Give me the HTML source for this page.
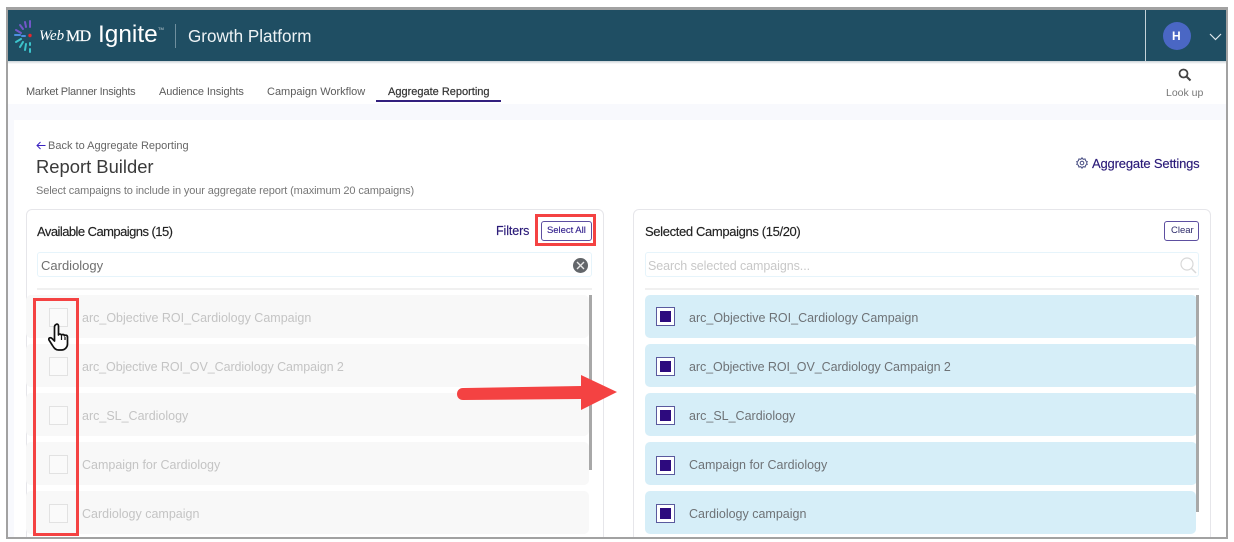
<!DOCTYPE html>
<html><head><meta charset="utf-8">
<style>
html,body{margin:0;padding:0;background:#fff}
#p{position:relative;width:1234px;height:542px;overflow:hidden;background:#fff;font-family:"Liberation Sans",sans-serif;color:#555}
#p div,#p span.t{position:absolute;box-sizing:border-box}
.t{white-space:nowrap;line-height:1}
.row{height:43px;border-radius:5px}
.a{left:26px;width:563px;background:#f8f8f8}
.s{left:645px;width:552px;background:#d6eef8}
.cb{width:19px;height:19px;border:1px solid #e2e2e2;background:#fafafa;left:49px}
.cs{width:19px;height:19px;border:1px solid #5a5a9e;background:#fff;left:656px}
.cs:after{content:"";position:absolute;left:3px;top:3px;width:11px;height:11px;background:#2d0a7e}
.lab{font-size:12.5px;color:#c4c4c4}
.sel{font-size:12.5px;color:#6e7276}
</style></head><body><div id="p">
<div style="left:7px;top:104px;width:1219px;height:434px;background:#f8f9fd"></div>
<div style="left:14px;top:120px;width:1212px;height:418px;background:#fff"></div>
<div style="left:7px;top:10px;width:1219px;height:51px;background:#1f4e63"></div>
<div style="left:7px;top:61px;width:1219px;height:3px;background:linear-gradient(#c9d2d6,#fff)"></div>
<div style="left:1145px;top:10px;width:1px;height:51px;background:#c4d2d8"></div>

<svg style="position:absolute;left:14px;top:19px" width="20" height="34" viewBox="0 0 20 34" fill="none" stroke-linecap="round" stroke-width="2">
<path d="M16 2v6M11 3l1 5M6 6l3 4M2 11l5 3" stroke="#7257c9"/>
<path d="M1 16h5M8 17h3" stroke="#4d8fe0"/>
<path d="M2 23l5-3M6 28l3-5M11 31l1-6M16 33v-3M16 26v-2" stroke="#3cc4cc"/>
<circle cx="16" cy="16.5" r="1.7" fill="#e8262d" stroke="none"/>
</svg>
<span class="t" style="left:39px;top:28px;font:italic 15px 'Liberation Serif',serif;color:#fff;letter-spacing:-.1px">Web</span>
<span class="t" style="left:66px;top:28px;font:16px 'Liberation Serif',serif;color:#fff;letter-spacing:-.6px;-webkit-text-stroke:.2px #fff">MD</span>
<span class="t" style="left:98px;top:23px;font-size:24.4px;color:#fff">Ignite</span>
<span class="t" style="left:158px;top:27px;font-size:4px;color:#cfd8dc">TM</span>
<div style="left:175px;top:24px;width:1px;height:24px;background:#6f8f9e"></div>
<span class="t" style="left:188px;top:28px;font-size:17.1px;color:#eef3f5">Growth Platform</span>
<div style="left:1163px;top:22px;width:28px;height:28px;border-radius:50%;background:#4a67c4"></div>
<span class="t" style="left:1172px;top:30px;font-size:12px;font-weight:bold;color:#fff">H</span>
<svg style="position:absolute;left:1209px;top:33px" width="13" height="8" viewBox="0 0 13 8"><path d="M1 1l5.5 5.500L12 1" fill="none" stroke="#dfe8ec" stroke-width="1.200"/></svg>

<span class="t" style="left:26px;top:87px;font-size:11px;color:#5c5c5c;letter-spacing:-.27px">Market Planner Insights</span>
<span class="t" style="left:159px;top:87px;font-size:11px;color:#5c5c5c;letter-spacing:-.12px">Audience Insights</span>
<span class="t" style="left:267px;top:87px;font-size:11px;color:#5c5c5c">Campaign Workflow</span>
<span class="t" style="left:388px;top:87px;font-size:11px;color:#333;-webkit-text-stroke:.2px #333">Aggregate Reporting</span>
<div style="left:376px;top:100px;width:125px;height:2px;background:#33207e"></div>
<svg style="position:absolute;left:1178px;top:68px" width="14" height="14" viewBox="0 0 14 14"><circle cx="5.5" cy="5.5" r="4" fill="none" stroke="#444" stroke-width="1.800"/><path d="M8.500 8.500l4 4" stroke="#444" stroke-width="2"/></svg>
<span class="t" style="left:1166px;top:88px;font-size:10.5px;color:#777">Look up</span>

<svg style="position:absolute;left:36px;top:141px" width="10" height="9" viewBox="0 0 10 9"><path d="M9.500 4.500H1M4.500 1L1 4.500 4.500 8" fill="none" stroke="#3a22c0" stroke-width="1"/></svg>
<span class="t" style="left:48px;top:141px;font-size:11px;color:#666">Back to Aggregate Reporting</span>
<span class="t" style="left:36px;top:158px;font-size:18.4px;color:#3a3a3a">Report Builder</span>
<span class="t" style="left:36px;top:186px;font-size:11px;color:#777;letter-spacing:-.12px">Select campaigns to include in your aggregate report (maximum 20 campaigns)</span>
<svg style="position:absolute;left:1076px;top:157px" width="12" height="12" viewBox="0 0 12 12" fill="none" stroke="#444a80" stroke-width="1"><circle cx="6" cy="6" r="1.800"/><path d="M6 .8l1.200 1.500 1.900-.3.500 1.800 1.700.9-.8 1.300.8 1.300-1.700.9-.5 1.800-1.900-.3L6 11.200 4.800 9.700l-1.900.3-.5-1.800L.7 7.300 1.500 6 .7 4.700l1.700-.9.5-1.800 1.900.3z"/></svg>
<span class="t" style="left:1092px;top:157px;font-size:13px;color:#2a1a78;letter-spacing:-.17px;-webkit-text-stroke:.15px #2a1a78">Aggregate Settings</span>

<div style="left:26px;top:209px;width:578px;height:340px;border:1px solid #e6e6ea;border-radius:6px;background:#fff"></div>
<div style="left:633px;top:209px;width:578px;height:340px;border:1px solid #e6e6ea;border-radius:6px;background:#fff"></div>

<span class="t" style="left:37px;top:225px;font-size:13px;color:#222;letter-spacing:-.55px;-webkit-text-stroke:.15px #222">Available Campaigns (15)</span>
<span class="t" style="left:496px;top:225px;font-size:12.5px;color:#2a1a78;letter-spacing:-.1px;-webkit-text-stroke:.15px #2a1a78">Filters</span>
<div style="left:541px;top:221px;width:51px;height:20px;border:1px solid #5d4fa0;border-radius:3px;background:#fff"></div>
<span class="t" style="left:547px;top:226px;font-size:9.5px;color:#2d1a8a;letter-spacing:-.03px;-webkit-text-stroke:.1px #2d1a8a">Select All</span>
<div style="left:535px;top:214px;width:61px;height:32px;border:3px solid #f44242"></div>

<div style="left:37px;top:252px;width:555px;height:25px;border:1px solid #e6f4fb;border-radius:3px"></div>
<span class="t" style="left:41px;top:259px;font-size:13px;color:#707070">Cardiology</span>
<div style="left:573px;top:258px;width:15px;height:15px;border-radius:50%;background:#63666a"></div>
<svg style="position:absolute;left:576px;top:261px" width="9" height="9" viewBox="0 0 9 9"><path d="M1 1l7 7M8 1L1 8" stroke="#e8e8e8" stroke-width="1.400"/></svg>
<div style="left:37px;top:288px;width:555px;height:2px;background:#f0f0f0"></div>

<div class="row a" style="top:295px"></div>
<div class="row a" style="top:344px"></div>
<div class="row a" style="top:393px"></div>
<div class="row a" style="top:442px"></div>
<div class="row a" style="top:491px"></div>
<div class="cb" style="top:308px"></div>
<div class="cb" style="top:357px"></div>
<div class="cb" style="top:406px"></div>
<div class="cb" style="top:455px"></div>
<div class="cb" style="top:504px"></div>
<span class="t lab" style="left:82px;top:312px">arc_Objective ROI_Cardiology Campaign</span>
<span class="t lab" style="left:82px;top:361px;letter-spacing:-.07px">arc_Objective ROI_OV_Cardiology Campaign 2</span>
<span class="t lab" style="left:82px;top:410px">arc_SL_Cardiology</span>
<span class="t lab" style="left:82px;top:459px">Campaign for Cardiology</span>
<span class="t lab" style="left:82px;top:508px">Cardiology campaign</span>
<div style="left:589px;top:295px;width:3px;height:175px;background:#a8a8a8"></div>

<div style="left:33px;top:298px;width:46px;height:238px;border:3px solid #f44242"></div>

<svg style="position:absolute;left:47px;top:322px" width="26" height="30" viewBox="0 0 26 30"><path d="M9 2.500c1.300-1 2.500 0 2.500 1.500v9c0-1 2.500-1.600 3 .3 0-1 2.700-1.300 3 .5 .3-1 2.800-.8 3 1V22c0 3-2.500 6-6 6h-3c-3 0-4.500-2-6-4.500L2 18c-1-2 1.500-3 3-1.500L7.500 19V5c0-1 .5-2 1.500-2.500z" fill="#fff" stroke="#111" stroke-width="1.700" stroke-linejoin="round"/><path d="M14.500 14v4M18 15v3" stroke="#111" stroke-width="1.200"/></svg>

<span class="t" style="left:645px;top:225px;font-size:13px;color:#222;letter-spacing:-.36px;-webkit-text-stroke:.15px #222">Selected Campaigns (15/20)</span>
<div style="left:1164px;top:221px;width:35px;height:20px;border:1px solid #5d4fa0;border-radius:3px;background:#fff"></div>
<span class="t" style="left:1171px;top:226px;font-size:9.5px;color:#2d2a6a">Clear</span>
<div style="left:645px;top:252px;width:554px;height:25px;border:1px solid #e6f4fb;border-radius:3px"></div>
<span class="t" style="left:648px;top:260px;font-size:12.5px;color:#c8c8c8;letter-spacing:-.07px">Search selected campaigns...</span>
<svg style="position:absolute;left:1180px;top:257px" width="17" height="17" viewBox="0 0 17 17"><circle cx="7" cy="7" r="6" fill="none" stroke="#d8d8d8" stroke-width="1.200"/><path d="M11.500 11.500l4.500 4.500" stroke="#d8d8d8" stroke-width="1.500"/></svg>
<div style="left:645px;top:288px;width:554px;height:2px;background:#f0f0f0"></div>

<div class="row s" style="top:295px"></div>
<div class="row s" style="top:344px"></div>
<div class="row s" style="top:393px"></div>
<div class="row s" style="top:442px"></div>
<div class="row s" style="top:491px;width:551px"></div>
<div class="cs" style="top:307px"></div>
<div class="cs" style="top:357px"></div>
<div class="cs" style="top:406px"></div>
<div class="cs" style="top:456px"></div>
<div class="cs" style="top:504px"></div>
<span class="t sel" style="left:689px;top:312px">arc_Objective ROI_Cardiology Campaign</span>
<span class="t sel" style="left:689px;top:361px;letter-spacing:-.07px">arc_Objective ROI_OV_Cardiology Campaign 2</span>
<span class="t sel" style="left:689px;top:410px">arc_SL_Cardiology</span>
<span class="t sel" style="left:689px;top:459px">Campaign for Cardiology</span>
<span class="t sel" style="left:689px;top:508px">Cardiology campaign</span>
<div style="left:1196px;top:295px;width:3px;height:217px;background:#a8a8a8"></div>

<svg style="position:absolute;left:450px;top:370px" width="175" height="46" viewBox="0 0 175 46"><path d="M13 18L131 16V5L167 22 131 40V29L13 30C5 30 5 18 13 18z" fill="#f44242"/></svg>

<div style="left:0;top:538px;width:1234px;height:4px;background:#fff"></div>
<div style="left:6px;top:7px;width:1222px;height:532px;border:2px solid #a2a2a2;border-width:3px 2px 2px 2px;background:transparent"></div>
</div></body></html>
